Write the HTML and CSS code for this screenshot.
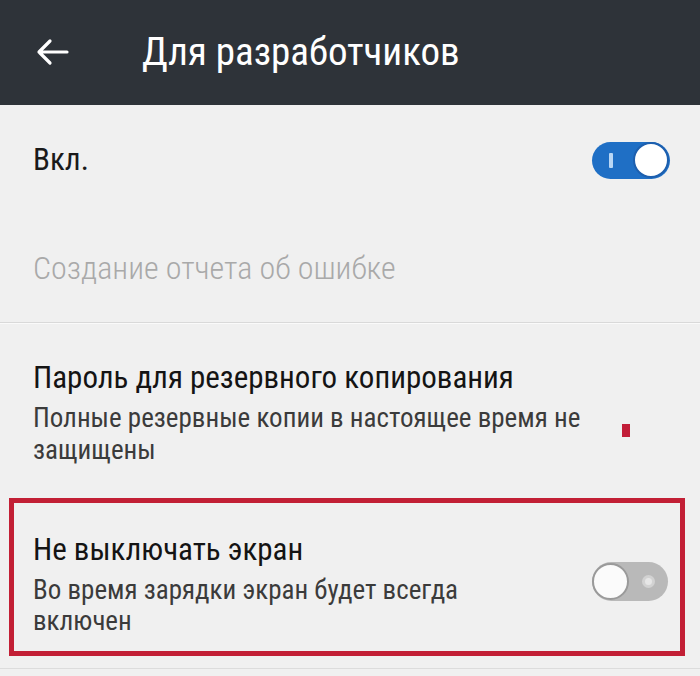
FILE: index.html
```html
<!DOCTYPE html>
<html lang="ru">
<head>
<meta charset="utf-8">
<link rel="stylesheet" href="styles.css">
</head>
<body>
<header class="bar">
  <svg class="back" width="34" height="28" viewBox="0 0 34 28"><path d="M32 14H4M15 3L4 14l11 11" fill="none" stroke="#fff" stroke-width="3.2" stroke-linecap="round" stroke-linejoin="round"/></svg>
  <h1 class="title">Для разработчиков</h1>
</header>
<main class="list">
  <div class="row row-on">
    <div class="main-label">Вкл.</div>
    <div class="switch on"><span class="mark"></span><span class="thumb"></span></div>
  </div>
  <div class="row row-bug">
    <div class="disabled">Создание отчета об ошибке</div>
  </div>
  <div class="row row-pass">
    <div class="texts">
      <div class="label">Пароль для резервного копирования</div>
      <div class="sub sub-pass">Полные резервные копии в настоящее время не защищены</div>
    </div>
    <span class="dot"></span>
  </div>
  <div class="row row-awake">
    <div class="texts">
      <div class="label">Не выключать экран</div>
      <div class="sub sub-awake">Во время зарядки экран будет всегда включен</div>
    </div>
    <div class="switch off"><span class="thumb"></span><span class="ring"></span></div>
  </div>
  <div class="tail"></div>
</main>
</body>
</html>
```
FILE: styles.css
```css
html, body { margin: 0; padding: 0; }
body {
  width: 700px;
  height: 676px;
  overflow: hidden;
  background: #f0f0f0;
  font-family: Roboto, "Noto Sans", sans-serif;
  font-stretch: 75%;
}
.bar {
  height: 105px;
  background: #2e3339;
  display: flex;
  align-items: center;
  box-sizing: border-box;
  padding: 0 0 2px 35px;
}
.back { display: block; flex: none; }
.title {
  margin: 0 0 0 73px;
  color: #fff;
  font-weight: 400;
  font-size: 39px;
  line-height: 46px;
}
.list { display: flex; flex-direction: column; }
.row {
  display: flex;
  align-items: center;
  justify-content: space-between;
  padding: 0 30px 0 33px;
  box-sizing: border-box;
}
.row-on { height: 110px; }
.main-label { font-size: 31px; color: #1a1a1a; line-height: 36px; }
.row-bug {
  height: 108px;
  border-bottom: 1px solid #d9d9d9;
  box-shadow: 0 1px 0 #fafafa;
  padding-bottom: 1px;
}
.disabled { font-size: 32px; font-weight: 300; color: #a9a9a9; line-height: 38px; }
.row-pass {
  height: 175px;
  align-items: flex-start;
  padding-top: 37px;
  padding-right: 70px;
}
.texts { display: flex; flex-direction: column; }
.label { font-size: 31px; color: #141414; line-height: 36px; }
.sub { font-size: 27px; color: #3b3b3b; line-height: 32px; margin-top: 6px; }
.sub-pass { width: 580px; }
.sub-awake { width: 480px; line-height: 31px; margin-top: 7px; }
.dot { width: 8px; height: 13px; background: #c21d38; flex: none; margin-top: 64px; }
.row-awake {
  margin: 0 15px 0 9px;
  height: 158px;
  border: 5px solid #c21f35;
  align-items: flex-start;
  padding: 29px 12px 0 19px;
}
.switch { position: relative; flex: none; border-radius: 20px; box-sizing: border-box; }
.switch.on { width: 78px; height: 37px; background: #1f6fc5; }
.switch.on .thumb {
  position: absolute; right: 1px; top: 0.5px; width: 36px; height: 36px;
  border-radius: 50%; background: #fff; box-sizing: border-box; border: 2px solid #1d5fae;
}
.switch.on .mark { position: absolute; left: 17px; top: 11px; width: 4px; height: 15px; background: #b9d7f5; border-radius: 1px; }
.switch.off { width: 76px; height: 39px; background: #b9b9b9; margin-top: 30px; }
.switch.off .thumb {
  position: absolute; left: 0; top: 1px; width: 37px; height: 37px;
  border-radius: 50%; background: #fbfbfb; box-sizing: border-box; border: 2px solid #9a9a9a;
}
.switch.off .ring {
  position: absolute; left: 50px; top: 13px; width: 13px; height: 13px;
  border-radius: 50%; background: #e6e6e6; box-sizing: border-box; border: 3px solid #d2d2d2;
}
.tail { height: 1px; background: #dcdcdc; margin-top: 12px; }
```
